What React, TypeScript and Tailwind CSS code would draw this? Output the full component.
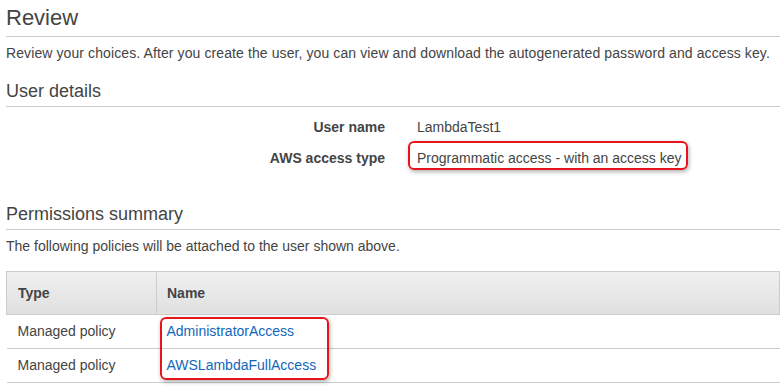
import React from 'react';

const details = [
  { label: 'User name', value: 'LambdaTest1', marked: false },
  { label: 'AWS access type', value: 'Programmatic access - with an access key', marked: true },
];

const policies = [
  { type: 'Managed policy', name: 'AdministratorAccess' },
  { type: 'Managed policy', name: 'AWSLambdaFullAccess' },
];

function SectionTitle({ children, size }: { children: React.ReactNode; size: 'lg' | 'md' }) {
  return (
    <h2
      className={
        size === 'lg'
          ? 'text-[22px] leading-[36px] border-b border-[#cccccc]'
          : 'text-[18px] leading-[24px] pb-[3px] border-b border-[#cccccc]'
      }
    >
      {children}
    </h2>
  );
}

export default function App() {
  return (
    <div
      className="w-[781px] h-[387px] overflow-hidden bg-white text-[#444444] pl-[6px] pr-px"
      style={{ fontFamily: '"Liberation Sans", Arial, sans-serif' }}
    >
      <SectionTitle size="lg">Review</SectionTitle>
      <p className="text-[14px] leading-[18px] mt-[7px] tracking-[0.1px]">
        Review your choices. After you create the user, you can view and download the autogenerated password and access key.
      </p>

      <div className="mt-[17px]">
        <SectionTitle size="md">User details</SectionTitle>
      </div>

      <div className="mt-[10px] flex flex-col gap-[11px]">
        {details.map((d) => (
          <div key={d.label} className="flex text-[14px] leading-[20px]">
            <div className="w-[379px] text-right font-bold">{d.label}</div>
            <div className="ml-[32px] relative">
              {d.value}
              {d.marked && (
                <span className="absolute -left-[9px] -right-[6px] -top-[7px] -bottom-[2px] border-2 border-[#e8141b] rounded-[6px] shadow-[1px_2px_4px_rgba(0,0,0,0.3)]" />
              )}
            </div>
          </div>
        ))}
      </div>

      <div className="mt-[34px]">
        <SectionTitle size="md">Permissions summary</SectionTitle>
      </div>
      <p className="text-[14px] leading-[18px] mt-[7px]">
        The following policies will be attached to the user shown above.
      </p>

      <div className="relative mt-[16px]">
        <table className="w-full border-collapse text-[14px]">
          <thead>
            <tr className="bg-gradient-to-b from-[#efefef] to-[#e0e0e0]">
              <th className="w-[150px] h-[43px] text-left font-bold pl-[11px] border border-[#cccccc]">Type</th>
              <th className="h-[43px] text-left font-bold pl-[10px] border border-[#cccccc]">Name</th>
            </tr>
          </thead>
          <tbody>
            {policies.map((p) => (
              <tr key={p.name} className="border-b border-[#cccccc]">
                <td className="h-[34px] pl-[11px]">{p.type}</td>
                <td className="h-[34px] pl-[10px] text-[#1166bb]">{p.name}</td>
              </tr>
            ))}
          </tbody>
        </table>
        <span className="absolute left-[154px] top-[46px] w-[169px] h-[63px] border-2 border-[#e8141b] rounded-[6px] shadow-[1px_2px_4px_rgba(0,0,0,0.3)]" />
      </div>
    </div>
  );
}
